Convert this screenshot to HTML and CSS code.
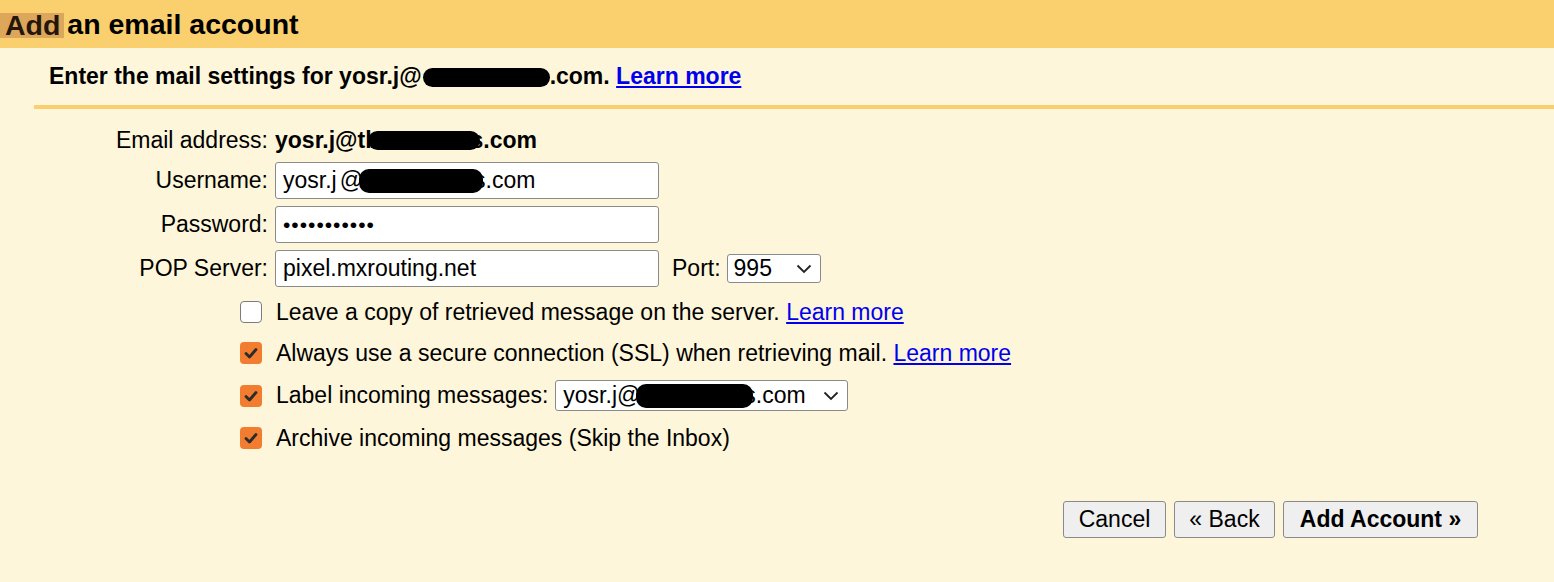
FILE: index.html
```html
<!DOCTYPE html>
<html lang="en">
<head>
<meta charset="utf-8">
<title>Add an email account</title>
<link rel="stylesheet" href="styles.css">
</head>
<body>
<div class="header">
  <h1 class="title"><span class="sel">Add</span> an email account</h1>
</div>
<div class="sub">Enter the mail settings for yosr.j@<span class="redact r-sub"></span>.com. <a href="#">Learn more</a></div>

<div class="form">
  <div class="lbl">Email address:</div>
  <div class="val email">yosr.j@tl<span class="redact r-email"></span>s.com</div>

  <div class="lbl">Username:</div>
  <div class="val"><div class="input">yosr.j<span class="at">@</span><span class="redact r-user"></span>s.com</div></div>

  <div class="lbl">Password:</div>
  <div class="val"><div class="input pw">•••••••••••</div></div>

  <div class="lbl">POP Server:</div>
  <div class="val pop">
    <div class="input">pixel.mxrouting.net</div>
    <span class="port-lbl">Port:</span>
    <div class="select port"><span>995</span><svg class="chev" width="16" height="10" viewBox="0 0 16 10"><path d="M1.5 1.5 L8 8 L14.5 1.5" fill="none" stroke="#222" stroke-width="1.8"/></svg></div>
  </div>
</div>

<div class="options">
  <div class="opt"><span class="cb"></span><span>Leave a copy of retrieved message on the server. <a href="#">Learn more</a></span></div>
  <div class="opt"><span class="cb on"><svg width="22" height="22" viewBox="0 0 22 22"><path d="M6 11.5 L9.5 15 L16 7.5" fill="none" stroke="#2b2b2b" stroke-width="2.8" stroke-linecap="round" stroke-linejoin="round"/></svg></span><span>Always use a secure connection (SSL) when retrieving mail. <a href="#">Learn more</a></span></div>
  <div class="opt opt-label"><span class="cb on"><svg width="22" height="22" viewBox="0 0 22 22"><path d="M6 11.5 L9.5 15 L16 7.5" fill="none" stroke="#2b2b2b" stroke-width="2.8" stroke-linecap="round" stroke-linejoin="round"/></svg></span><span>Label incoming messages:</span>
    <div class="select label-sel"><span>yosr.j@<span class="redact r-label"></span>s.com</span><svg class="chev" width="16" height="10" viewBox="0 0 16 10"><path d="M1.5 1.5 L8 8 L14.5 1.5" fill="none" stroke="#222" stroke-width="1.8"/></svg></div>
  </div>
  <div class="opt"><span class="cb on"><svg width="22" height="22" viewBox="0 0 22 22"><path d="M6 11.5 L9.5 15 L16 7.5" fill="none" stroke="#2b2b2b" stroke-width="2.8" stroke-linecap="round" stroke-linejoin="round"/></svg></span><span>Archive incoming messages (Skip the Inbox)</span></div>
</div>

<div class="buttons">
  <button class="btn cancel">Cancel</button>
  <button class="btn back">« Back</button>
  <button class="btn primary">Add Account »</button>
</div>
</body>
</html>
```

FILE: styles.css
```css
html, body {
  margin: 0;
  padding: 0;
  background: #fef6da;
  font-family: "Liberation Sans", Arial, Helvetica, sans-serif;
  color: #000;
  height: 100%;
}

.header {
  background: #facf6e;
  height: 48px;
}

.title {
  margin: 0;
  font-size: 28.5px;
  font-weight: bold;
  line-height: 48px;
  white-space: nowrap;
}

.sel {
  display: inline-block;
  background: #dca75b;
  color: #24160a;
  padding: 0 4px 0 5px;
  margin-right: -5px;
  line-height: 25px;
  vertical-align: -1px;
}

.sub {
  margin-left: 34px;
  padding-left: 15px;
  height: 57px;
  line-height: 57px;
  font-size: 23px;
  font-weight: bold;
  border-bottom: 4px solid #facf6e;
  white-space: nowrap;
}

a {
  color: #0000ee;
  text-decoration: underline;
}

.redact {
  display: inline-block;
  background: #000;
  border-radius: 10px;
  position: relative;
  z-index: 1;
}

.r-sub {
  width: 127px;
  height: 19px;
  vertical-align: -3px;
  margin-left: 1px;
}

.form {
  display: grid;
  grid-template-columns: 268px 1fr;
  column-gap: 7px;
  row-gap: 7px;
  padding-top: 17px;
  font-size: 23px;
}

.lbl {
  text-align: right;
  display: flex;
  align-items: center;
  justify-content: flex-end;
  white-space: nowrap;
}

.val {
  display: flex;
  align-items: center;
  white-space: nowrap;
}

.email {
  height: 29px;
  font-weight: bold;
}

.r-email {
  width: 112px;
  height: 19px;
  margin-left: -4px;
  margin-right: -9px;
}

.input {
  box-sizing: border-box;
  width: 384px;
  height: 37px;
  background: #fff;
  border: 1px solid #8a8a8a;
  border-radius: 3px;
  padding: 0 7px;
  display: flex;
  align-items: center;
  font-size: 23px;
  white-space: nowrap;
  overflow: hidden;
}

.at {
  margin-left: 3px;
}

.r-user {
  width: 124px;
  height: 24px;
  margin-left: -4px;
  margin-right: -9px;
}

.pw {
  font-size: 21px;
  letter-spacing: 1px;
}

.port-lbl {
  margin-left: 13px;
}

.select {
  box-sizing: border-box;
  display: flex;
  align-items: center;
  justify-content: space-between;
  background: #fff;
  border: 1px solid #8a8a8a;
  border-radius: 3px;
  white-space: nowrap;
}

.port {
  margin-left: 6px;
  width: 94px;
  height: 29px;
  padding: 0 8px 0 6px;
  font-size: 23px;
}

.options {
  padding-left: 240px;
  margin-top: 10px;
  display: flex;
  flex-direction: column;
  gap: 11px;
  font-size: 23px;
}

.opt {
  display: flex;
  align-items: center;
  min-height: 30px;
  white-space: nowrap;
}

.opt-label {
  min-height: 33px;
}

.cb {
  box-sizing: border-box;
  width: 22px;
  height: 22px;
  border-radius: 4px;
  border: 1.5px solid #7c7c7c;
  background: #fff;
  margin-right: 14px;
  flex: none;
  display: flex;
}

.cb.on {
  background: #f27d30;
  border: none;
}

.label-sel {
  margin-left: 7px;
  width: 293px;
  height: 31px;
  padding: 0 8px 0 7px;
}

.r-label {
  width: 117px;
  height: 24px;
  vertical-align: -5px;
  margin-left: -4px;
  margin-right: -9px;
}

.buttons {
  display: flex;
  justify-content: flex-end;
  gap: 8px;
  padding-right: 76px;
  margin-top: 48px;
}

.btn {
  box-sizing: border-box;
  height: 37px;
  background: #efefef;
  border: 1px solid #8a8a8a;
  border-radius: 3px;
  font-family: "Liberation Sans", Arial, Helvetica, sans-serif;
  font-size: 23px;
  color: #000;
  padding: 0;
}

.cancel { width: 103px; }
.back { width: 101px; }
.primary { width: 195px; font-weight: bold; }
```
